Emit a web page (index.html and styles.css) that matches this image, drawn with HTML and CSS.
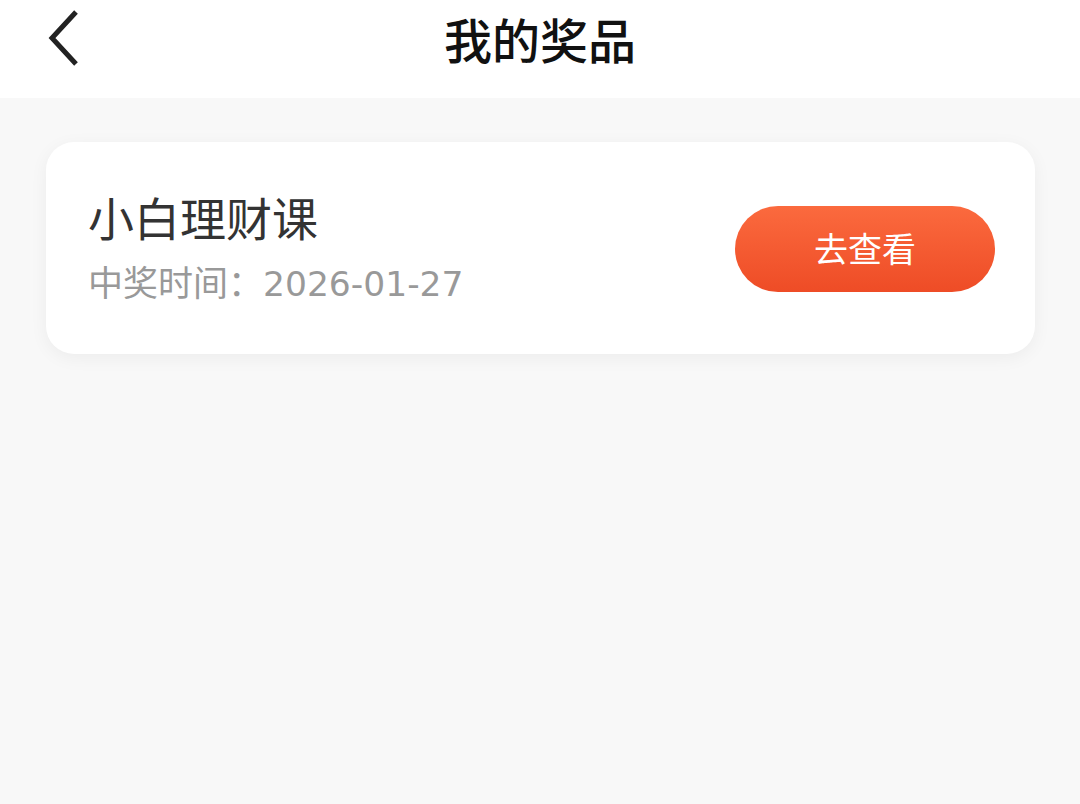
FILE: index.html
```html
<!DOCTYPE html>
<html lang="zh-CN">
<head>
    <meta charset="UTF-8">
    <meta name="viewport" content="width=device-width, initial-scale=1.0">
    <title>我的奖品</title>
    <link rel="stylesheet" href="styles.css">
</head>
<body>
    <div class="topBar">
        <div class="backBtn">
            <svg width="36" height="56" viewBox="0 0 36 56">
                <path d="M32 2 L8 28 L32 54" fill="none" stroke="#222" stroke-width="5" stroke-linejoin="miter"/>
            </svg>
        </div>
        <div class="title">我的奖品</div>
    </div>

    <div class="listBox">
        <div class="prizeCard">
            <div class="info">
                <div class="name">小白理财课</div>
                <div class="time">中奖时间：<span class="num">2026-01-27</span></div>
            </div>
            <div class="goBtn">去查看</div>
        </div>
    </div>
</body>
</html>
```

FILE: styles.css
```css
*{
    padding: 0;
    margin: 0;
    box-sizing: border-box;
}
html,body{
    height: 100%;
}
body{
    background: #f8f8f8;
    font-family: "Noto Sans CJK SC", "Noto Sans", sans-serif;
}
.topBar{
    position: relative;
    height: 98px;
    background: #fff;
    display: flex;
    align-items: center;
    justify-content: center;
}
.topBar .backBtn{
    position: absolute;
    left: 44px;
    top: 10px;
    width: 36px;
    height: 56px;
}
.topBar .backBtn svg{
    display: block;
}
.topBar .title{
    font-size: 48px;
    font-weight: 500;
    color: #111;
    margin-top: -22px;
}
.listBox{
    padding: 44px 45px 0 46px;
}
.prizeCard{
    height: 212px;
    background: #fff;
    border-radius: 28px;
    box-shadow: 0 4px 18px rgba(0,0,0,0.05);
    display: flex;
    align-items: center;
    justify-content: space-between;
    padding: 0 40px 0 42px;
}
.prizeCard .info{
    margin-top: -4px;
}
.prizeCard .name{
    font-size: 46px;
    color: #333;
    line-height: 60px;
}
.prizeCard .time{
    font-size: 35px;
    color: #999;
    line-height: 46px;
    margin-top: 12px;
}
.prizeCard .time .num{
    font-family: "DejaVu Sans", sans-serif;
    font-size: 34.5px;
}
.prizeCard .goBtn{
    width: 260px;
    height: 86px;
    border-radius: 43px;
    background: linear-gradient(180deg, #fb6a3e, #ee4c26);
    color: #fff;
    font-size: 34px;
    text-align: center;
    line-height: 84px;
    margin-top: 2px;
}
```
